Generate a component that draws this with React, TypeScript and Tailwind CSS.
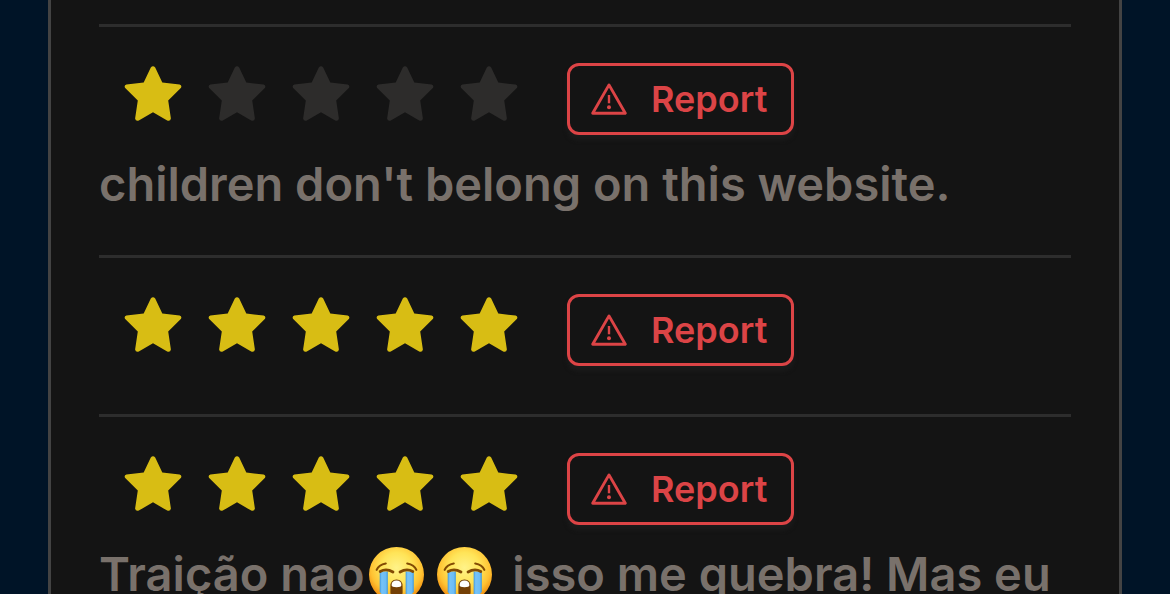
import type { ReactNode } from "react";

function Star({ filled }: { filled: boolean }) {
  return (
    <svg
      viewBox="0 0 58 56"
      aria-hidden="true"
      className={filled ? "h-14 w-[58px] text-[#d8bd14]" : "h-14 w-[58px] text-[#2d2c2b]"}
    >
      <path
        fill="currentColor"
        d="M26.8 1.4Q29 -1 31.2 1.4L38.3 16.6L55.6 18.6Q58.4 19.6 56.8 22L44.2 34.5L46.9 52.4Q46.4 55.6 43.2 54.6L29 46.2L14.8 54.6Q11.6 55.6 11.1 52.4L13.8 34.5L1.2 22Q-0.4 19.6 2.4 18.6L19.7 16.6Z"
      />
    </svg>
  );
}

function WarningIcon() {
  return (
    <svg viewBox="0 0 36 32" aria-hidden="true" className="h-8 w-9" fill="none" stroke="currentColor">
      <path d="M18 1.9L34.3 30.2H1.7Z" strokeWidth="2.9" strokeLinejoin="round" />
      <path d="M18 12V20.3" strokeWidth="2.4" />
      <circle cx="18" cy="24.2" r="2" fill="currentColor" stroke="none" />
    </svg>
  );
}

function CryingFace() {
  return (
    <svg
      viewBox="0 0 54 54"
      role="img"
      aria-label="Loudly crying face"
      className="mr-[9px] ml-1 inline-block size-[55px] align-[-11px]"
    >
      <defs>
        <radialGradient id="face" cx="50%" cy="38%" r="62%">
          <stop offset="0" stopColor="#fff389" />
          <stop offset="0.45" stopColor="#ffe458" />
          <stop offset="0.75" stopColor="#ffc232" />
          <stop offset="1" stopColor="#ee8408" />
        </radialGradient>
        <linearGradient id="tears" x1="0" x2="1" y1="0" y2="0">
          <stop offset="0" stopColor="#3f98dc" />
          <stop offset="0.25" stopColor="#76c3f8" />
          <stop offset="0.75" stopColor="#6bbcf5" />
          <stop offset="1" stopColor="#3f98dc" />
        </linearGradient>
      </defs>
      <circle cx="27" cy="27" r="27" fill="url(#face)" />
      <path d="M10.5 24H18.5V50Q13 48 10.5 44Z" fill="url(#tears)" />
      <path d="M36 24H44V44Q41 48 36 50Z" fill="url(#tears)" />
      <g fill="none" stroke="#824b04" strokeLinecap="round">
        <path d="M7.5 22.5Q9.5 17.5 16.5 16.2" strokeWidth="2" />
        <path d="M37.5 16.2Q44.5 17.5 46.5 22.5" strokeWidth="2" />
        <path d="M11 24Q17 20.6 23.5 24.5" strokeWidth="2.8" />
        <path d="M30.5 24.5Q37 20.6 43 24" strokeWidth="2.8" />
      </g>
      <path d="M21 39Q21 32 27 32T33 39V45Q33 48 27 48T21 45Z" fill="#744006" />
      <path d="M22.2 37.5Q22.2 33 27 33T31.8 37.5Q31.8 39.4 27 39.4T22.2 37.5Z" fill="#fff" />
    </svg>
  );
}

function Review({ rating, children }: { rating: number; children?: ReactNode }) {
  return (
    <article className="border-t-3 border-[#2d2d2d] pt-9 pb-[35px]">
      <div className="flex items-center gap-9 pl-3">
        <div role="img" aria-label={`${rating} out of 5 stars`} className="flex h-[72px]">
          {[1, 2, 3, 4, 5].map((n) => (
            <span key={n} className="flex w-21 justify-center pt-[3px]">
              <Star filled={n <= rating} />
            </span>
          ))}
        </div>
        <button
          type="button"
          className="flex h-[72px] items-center gap-6 rounded-xl border-3 border-[#dc4446] pr-6 pl-[21px] text-4xl font-semibold text-[#dc4446] shadow-[0_5px_4px_0_#1b1b1b]"
        >
          <WarningIcon />
          Report
        </button>
      </div>
      <p className="mt-[13px] text-[47px] leading-[72px] font-semibold text-[#79716b]">{children}</p>
    </article>
  );
}

export default function App() {
  return (
    <main className="h-screen overflow-hidden bg-[#001427] px-12 font-['Inter',sans-serif]">
      <section className="min-h-full border-x-3 border-[#434343] bg-[#141414] px-12 pt-6">
        <Review rating={1}>children don't belong on this website.</Review>
        <Review rating={5} />
        <Review rating={5}>
          Traição nao
          <CryingFace />
          <CryingFace /> isso me quebra! Mas eu
        </Review>
      </section>
    </main>
  );
}
